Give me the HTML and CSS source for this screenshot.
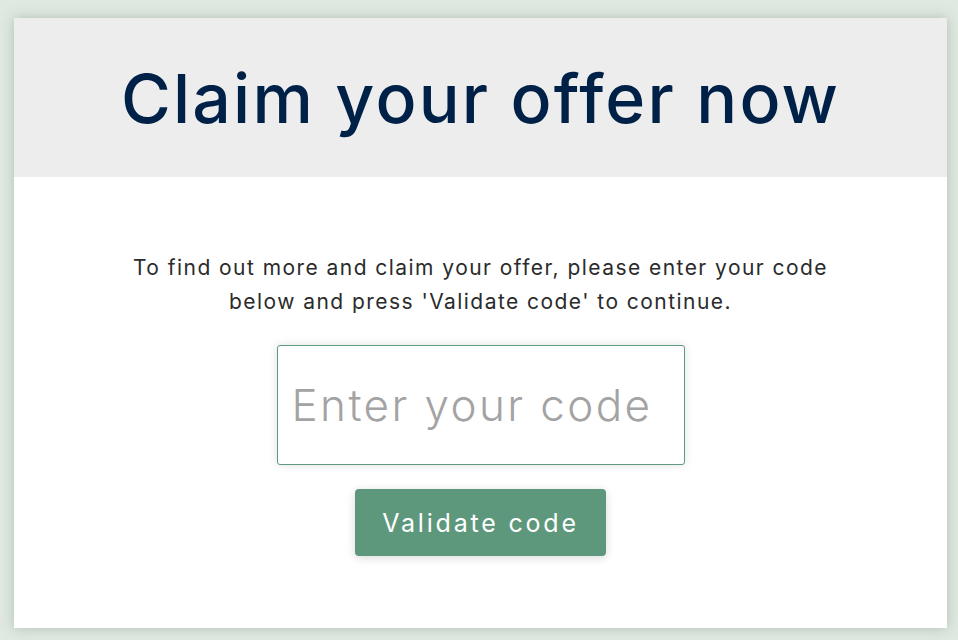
FILE: index.html
```html
<!DOCTYPE html>
<html lang="en">
<head>
<meta charset="utf-8">
<title>Claim your offer now</title>
<link rel="stylesheet" href="styles.css">
</head>
<body>
<main class="card">
  <header class="card-header">
    <h1 class="title">Claim your offer now</h1>
  </header>
  <section class="card-body">
    <p class="intro">To find out more and claim your offer, please enter your code below and press 'Validate code' to continue.</p>
    <input class="code-input" type="text" placeholder="Enter your code">
    <button class="validate-btn" type="button">Validate code</button>
  </section>
</main>
</body>
</html>
```

FILE: styles.css
```css
html, body {
  margin: 0;
  padding: 0;
}
body {
  background: #dfe9e1;
  font-family: "Inter", "Liberation Sans", sans-serif;
  padding: 18px 11px 12px 14px;
  height: 640px;
  box-sizing: border-box;
}
.card {
  background: #ffffff;
  box-shadow: 0 0 12px rgba(120, 140, 125, 0.45);
  height: 610px;
  display: flex;
  flex-direction: column;
}
.card-header {
  background: #ededed;
  height: 159px;
  display: flex;
  align-items: center;
  justify-content: center;
}
.title {
  margin: 0;
  font-size: 68px;
  font-weight: 500;
  color: #002147;
  letter-spacing: 2.2px;
}
.card-body {
  display: flex;
  flex-direction: column;
  align-items: center;
  padding-top: 74px;
}
.intro {
  margin: 0;
  width: 730px;
  text-align: center;
  font-size: 21px;
  line-height: 34px;
  color: #2b2b2b;
  letter-spacing: 1.45px;
}
.code-input {
  margin-top: 26px;
  width: 408px;
  height: 120px;
  box-sizing: border-box;
  border: 1px solid #5e9a7e;
  border-radius: 3px;
  padding: 0 14px;
  font-family: inherit;
  font-size: 44px;
  letter-spacing: 2.4px;
  color: #333;
  box-shadow: 0 0 10px rgba(0, 0, 0, 0.12);
  outline: none;
}
.code-input::placeholder {
  color: #a3a3a3;
  font-weight: 300;
}
.validate-btn {
  margin-top: 24px;
  width: 251px;
  height: 67px;
  border: none;
  border-radius: 4px;
  background: #5e987c;
  color: #ffffff;
  font-family: inherit;
  font-size: 25px;
  font-weight: 400;
  letter-spacing: 2.8px;
  box-shadow: 0 2px 10px rgba(0, 0, 0, 0.15);
  cursor: pointer;
}
```
